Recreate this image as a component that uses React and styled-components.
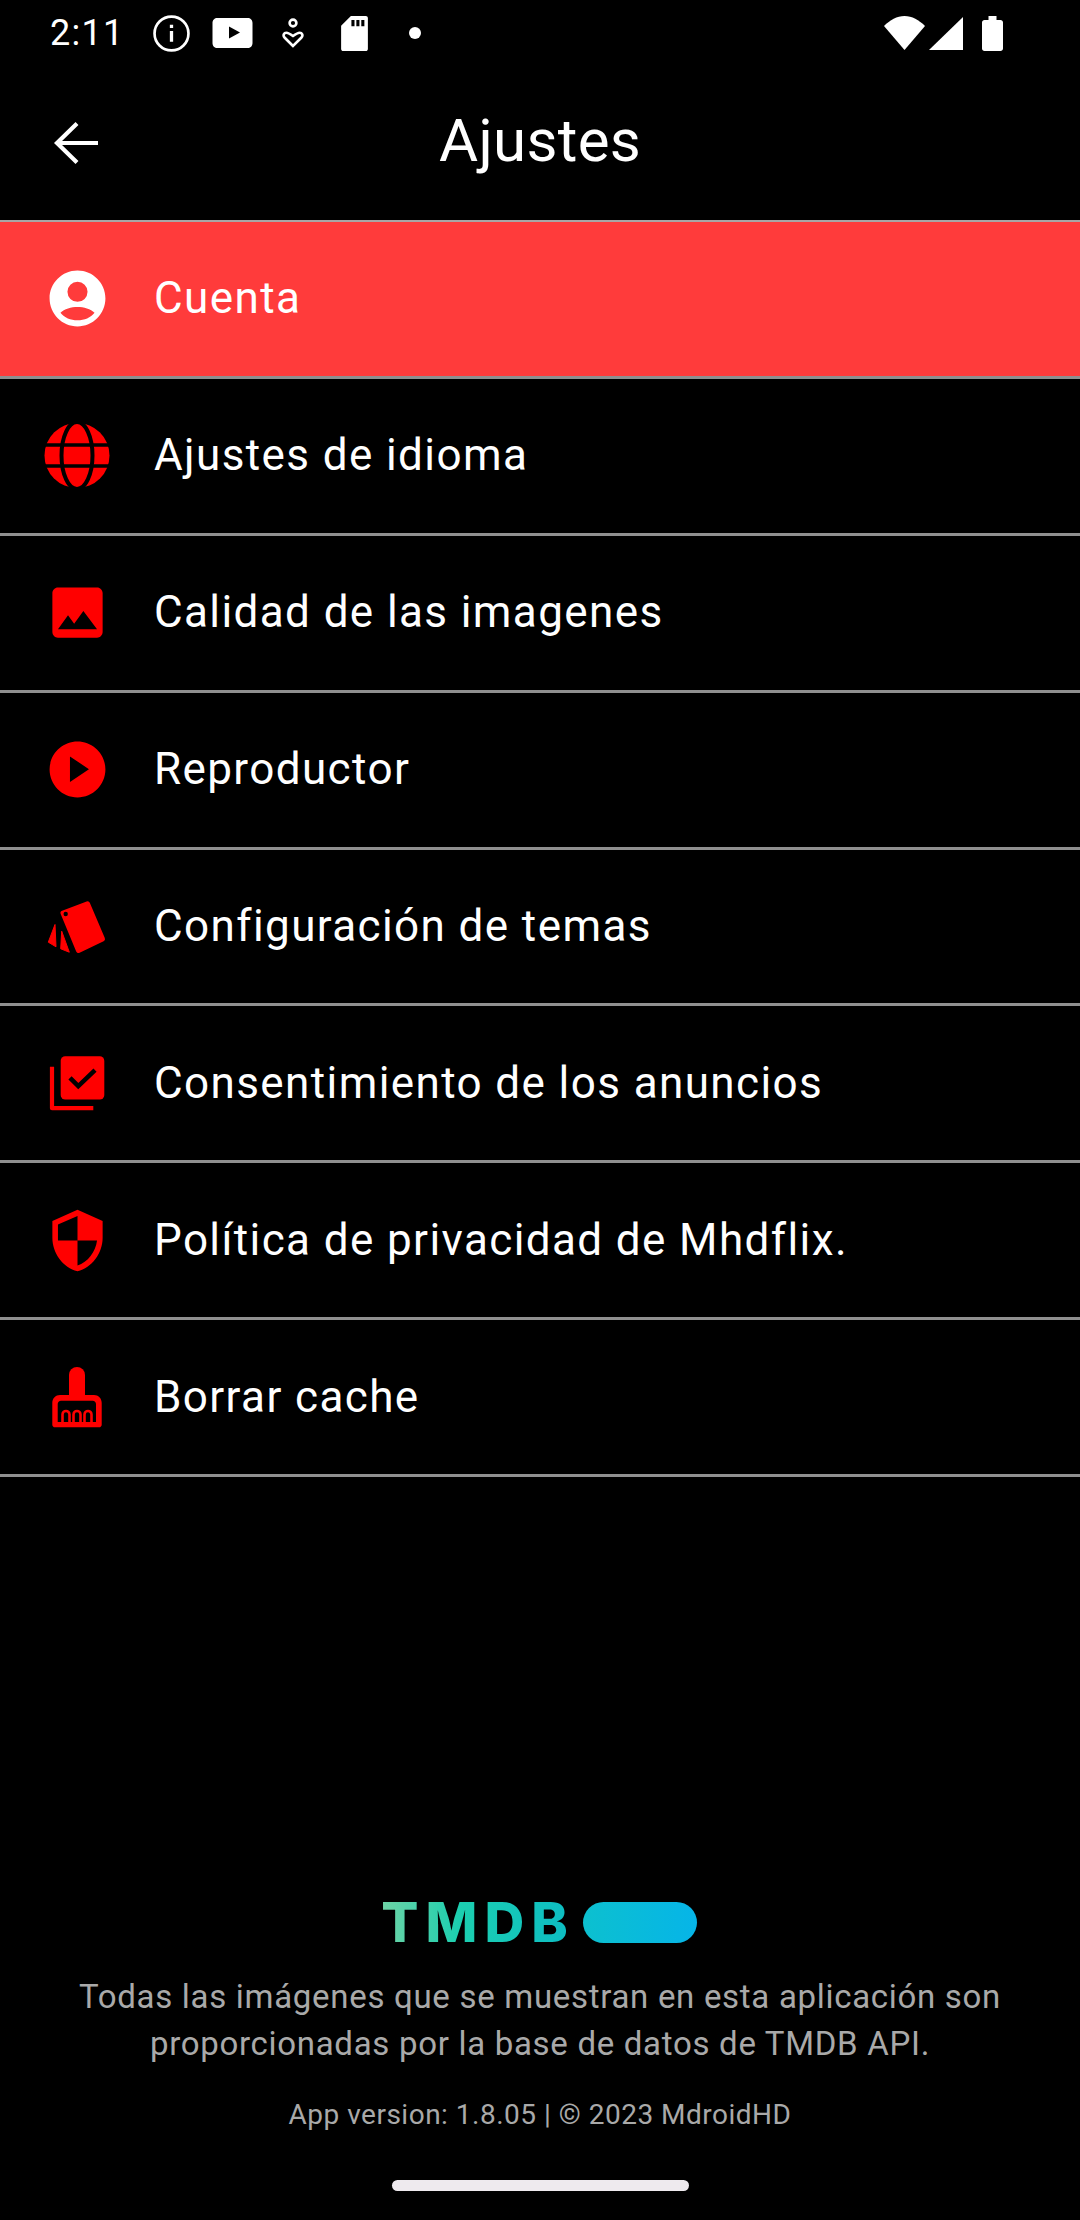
import styled, { createGlobalStyle } from 'styled-components';

const GlobalStyle = createGlobalStyle`
  html, body {
    margin: 0;
    padding: 0;
    background: #000;
  }
  body {
    font-family: Roboto, "Liberation Sans", sans-serif;
  }
`;

/* Material icons live on a 24 grid, the hand-traced ones on the 67px slot itself */
const ITEMS = [
  {
    label: 'Cuenta',
    active: true,
    viewBox: '0 0 24 24',
    icon: (
      <path
        fillRule="evenodd"
        d="M12 2C6.48 2 2 6.48 2 12s4.48 10 10 10 10-4.48 10-10S17.52 2 12 2zm0 4a3.600 3.600 0 1 1 0 7.200 3.600 3.600 0 0 1 0-7.200zm0 9c-2.200 0-4.800.7-6.100 2.100C7.300 18.900 9.500 19.800 12 19.800s4.700-.9 6.100-2.700C16.800 15.700 14.200 15 12 15z"
      />
    ),
  },
  {
    label: 'Ajustes de idioma',
    viewBox: '0 0 67 67',
    icon: (
      <>
        <circle cx="33" cy="33.500" r="32.500" />
        <ellipse cx="33" cy="33.500" rx="15.500" ry="33.500" fill="none" stroke="#000" strokeWidth="4" />
        <path d="M0 23h67M0 44h67" stroke="#000" strokeWidth="3.400" />
      </>
    ),
  },
  {
    label: 'Calidad de las imagenes',
    viewBox: '0 0 24 24',
    icon: (
      <path
        fillRule="evenodd"
        d="M21 19V5c0-1.100-.9-2-2-2H5c-1.100 0-2 .9-2 2v14c0 1.100.9 2 2 2h14c1.100 0 2-.9 2-2zM5 18l3.600-5 2.200 3 3.300-4.500L19 18z"
      />
    ),
  },
  {
    label: 'Reproductor',
    viewBox: '0 0 24 24',
    icon: (
      <path
        fillRule="evenodd"
        d="M12 2C6.48 2 2 6.48 2 12s4.48 10 10 10 10-4.48 10-10S17.52 2 12 2zM9.300 7.300v9.200l6.800-4.600z"
      />
    ),
  },
  {
    label: 'Configuración de temas',
    viewBox: '0 0 67 67',
    icon: (
      <>
        <path d="M19 20L43.500 10.800 58.500 46 34.500 57.500z" stroke="#f00" strokeWidth="5" strokeLinejoin="round" />
        <circle cx="21.700" cy="21" r="2.200" fill="#000" />
        <path d="M11 31.500L4.300 49.200 12 53.800z" stroke="#f00" strokeWidth="1" strokeLinejoin="round" />
        <path d="M17.700 38.200L16.700 55.800 25.300 59.200z" stroke="#f00" strokeWidth="1" strokeLinejoin="round" />
      </>
    ),
  },
  {
    label: 'Consentimiento de los anuncios',
    viewBox: '0 0 67 67',
    icon: (
      <>
        <rect x="16.700" y="6.200" width="43.600" height="43.300" rx="4.500" />
        <path d="M26 27.800l8.300 8.400L51 20.200" fill="none" stroke="#000" strokeWidth="4.500" />
        <path d="M8 16.800V58.200H49.300" fill="none" stroke="#f00" strokeWidth="4.200" strokeLinejoin="round" />
      </>
    ),
  },
  {
    label: 'Política de privacidad de Mhdflix.',
    viewBox: '0 0 24 24',
    icon: (
      <path d="M12 1L3 5v6c0 5.550 3.840 10.740 9 12 5.160-1.260 9-6.450 9-12V5l-9-4zm0 10.990h7c-.53 4.120-3.280 7.790-7 8.940V12H5V6.300l7-3.110v8.800z" />
    ),
  },
  {
    label: 'Borrar cache',
    viewBox: '0 0 67 67',
    icon: (
      <>
        <path d="M25 31V11a8 8 0 0 1 16 0V31z" />
        <path
          fillRule="evenodd"
          d="M16 31h34c4.300 0 7.700 3.400 7.700 7.700v22c0 1.500-1.200 2.600-2.600 2.600H11c-1.500 0-2.700-1.100-2.700-2.600v-22C8.300 34.400 11.700 31 16 31zm1 5.700c-1.800 0-3.300 1.500-3.300 3.300v18H52V40c0-1.800-1.500-3.300-3.300-3.300z"
        />
        <path
          d="M18.500 59V50.500a3.500 3.500 0 0 1 7 0V59M29.500 59V50.500a3.500 3.500 0 0 1 7 0V59M40.500 59V50.500a3.500 3.500 0 0 1 7 0V59"
          fill="none"
          stroke="#f00"
          strokeWidth="2.600"
        />
      </>
    ),
  },
];

export default function App() {
  return (
    <Screen>
      <GlobalStyle />
      <StatusBar>
        <Clock>2:11</Clock>
        <StatusIcons>
          <StatusIcon $left={0}>
            <svg width="37" height="37" viewBox="0 0 36 36" fill="none" stroke="#fff" strokeWidth="2.600">
              <circle cx="18" cy="18" r="16.500" />
              <path d="M18 15.500V26M18 9.500v3.200" strokeWidth="3.200" />
            </svg>
          </StatusIcon>
          <StatusIcon $left={22}>
            <svg width="41" height="30" viewBox="0 0 40 30">
              <path fill="#fff" fillRule="evenodd" d="M5 0h30c3 0 5 2 5 5v20c0 3-2 5-5 5H5c-3 0-5-2-5-5V5c0-3 2-5 5-5zm11.500 8.500v12l11-6z" />
            </svg>
          </StatusIcon>
          <StatusIcon $left={29}>
            <svg width="22" height="30" viewBox="0 0 22 30" fill="none" stroke="#fff" strokeWidth="2.600">
              <circle cx="11" cy="5" r="3.400" />
              <path d="M11 28L2.500 19.500c-1.800-2-.6-4.800 1.800-4.800 2 0 3.600 1 6.700 3.300 3.100-2.300 4.700-3.300 6.700-3.300 2.400 0 3.600 2.800 1.800 4.800z" />
            </svg>
          </StatusIcon>
          <StatusIcon $left={37}>
            <svg width="27" height="35" viewBox="0 0 26 34">
              <path fill="#fff" fillRule="evenodd" d="M9.500 0H24c1.100 0 2 .9 2 2v30c0 1.100-.9 2-2 2H2c-1.100 0-2-.9-2-2V9.500zM10 4v6h3V4zm4.800 0v6h3V4zm4.800 0v6h3V4z" />
            </svg>
          </StatusIcon>
          <NotifDot />
        </StatusIcons>
        <SystemIcons>
          <svg width="41" height="34" viewBox="0 0 41 34">
            <path fill="#fff" d="M20.500 34L0 10C6 4 13 0 20.500 0S35 4 41 10z" />
          </svg>
          <svg width="34" height="33" viewBox="0 0 34 33">
            <path fill="#fff" d="M34 0v33H0z" />
          </svg>
          <BatteryIcon>
            <svg width="21" height="35" viewBox="0 0 21 35">
              <path fill="#fff" d="M6.500 0h8v4h4c1.400 0 2.500 1.100 2.500 2.500V32.500c0 1.400-1.100 2.500-2.500 2.500h-16C1.100 35 0 33.900 0 32.500V6.500C0 5.100 1.100 4 2.500 4h4z" />
            </svg>
          </BatteryIcon>
        </SystemIcons>
      </StatusBar>

      <TopBar>
        <BackButton>
          <svg width="45" height="44" viewBox="0 0 45 44" fill="none" stroke="#fff" strokeWidth="4.200">
            <path d="M45 22H4M24 2.500L4 22l20 19.500" />
          </svg>
        </BackButton>
        <Title>Ajustes</Title>
      </TopBar>

      <Menu>
        {ITEMS.map((item) => (
          <MenuRow key={item.label} $active={item.active}>
            <IconSlot>
              <svg width="67" height="67" viewBox={item.viewBox} fill={item.active ? '#fff' : '#f00'}>
                {item.icon}
              </svg>
            </IconSlot>
            <MenuLabel>{item.label}</MenuLabel>
          </MenuRow>
        ))}
      </Menu>

      <Footer>
        <LogoRow>
          <LogoText>TMDB</LogoText>
          <LogoPill />
        </LogoRow>
        <Notice>
          Todas las imágenes que se muestran en esta aplicación son
          <br />
          proporcionadas por la base de datos de TMDB API.
        </Notice>
        <Version>App version: 1.8.05 | © 2023 MdroidHD</Version>
        <HomeBar />
      </Footer>
    </Screen>
  );
}

const Screen = styled.div`
  width: 1080px;
  height: 2220px;
  background: #000;
  color: #fff;
  display: flex;
  flex-direction: column;
  overflow: hidden;
`;

const StatusBar = styled.div`
  height: 66px;
  padding: 0 77px 0 50px;
  display: flex;
  align-items: center;
`;

const Clock = styled.span`
  font-size: 36px;
  letter-spacing: 1.300px;
  width: 103px;
`;

const StatusIcons = styled.div`
  display: flex;
  align-items: center;
  flex: 1;
`;

const StatusIcon = styled.span`
  display: block;
  line-height: 0;
  margin-left: ${({ $left }) => $left}px;
`;

const NotifDot = styled.span`
  width: 12px;
  height: 12px;
  border-radius: 50%;
  background: #fff;
  margin-left: 41px;
`;

const SystemIcons = styled.div`
  display: flex;
  align-items: center;
  gap: 4px;
`;

const BatteryIcon = styled.span`
  display: block;
  line-height: 0;
  margin-left: 15px;
`;

const TopBar = styled.div`
  height: 154px;
  display: flex;
  align-items: center;
  justify-content: center;
  position: relative;
`;

const BackButton = styled.div`
  position: absolute;
  left: 53px;
  top: 55px;
  line-height: 0;
`;

const Title = styled.h1`
  margin: 0 0 6px;
  font-size: 60px;
  font-weight: 400;
  letter-spacing: 0.300px;
`;

const Menu = styled.div`
  display: flex;
  flex-direction: column;
  border-top: 2px solid #a9a5a5;
`;

const MenuRow = styled.div`
  height: 153.875px;
  border-bottom: 3px solid #8f8f8f;
  background: ${({ $active }) => ($active ? '#ff3b3b' : '#000')};
  display: flex;
  align-items: center;
  padding-left: 44px;
  gap: 43px;
`;

const IconSlot = styled.div`
  width: 67px;
  height: 67px;
  line-height: 0;
`;

const MenuLabel = styled.span`
  font-size: 44px;
  letter-spacing: 1.400px;
  margin-top: -1px;
`;

const Footer = styled.div`
  flex: 1;
  display: flex;
  flex-direction: column;
  align-items: center;
  justify-content: flex-end;
`;

const LogoRow = styled.div`
  display: flex;
  align-items: center;
  gap: 8px;
  margin-bottom: 30px;
  margin-left: -2px;
`;

const LogoText = styled.span`
  font-family: Inter, Roboto, sans-serif;
  font-weight: 800;
  font-size: 55px;
  line-height: 42px;
  letter-spacing: 7px;
  background: linear-gradient(90deg, #6fd3a5, #1ccfb0 40%, #0cbcc4);
  -webkit-background-clip: text;
  background-clip: text;
  color: transparent;
`;

const LogoPill = styled.span`
  width: 114px;
  height: 41px;
  border-radius: 21px;
  background: linear-gradient(90deg, #0cc0cf, #06b5e8);
`;

const Notice = styled.p`
  margin: 0;
  font-size: 33px;
  line-height: 47px;
  letter-spacing: 0.700px;
  text-align: center;
  color: #a9a9a9;
`;

const Version = styled.div`
  margin-top: 31px;
  font-size: 28px;
  line-height: 33px;
  letter-spacing: 0.500px;
  color: #a9a9a9;
`;

const HomeBar = styled.div`
  width: 297px;
  height: 11px;
  margin: 49px 0 29px;
  border-radius: 6px;
  background: #eeeaee;
`;
